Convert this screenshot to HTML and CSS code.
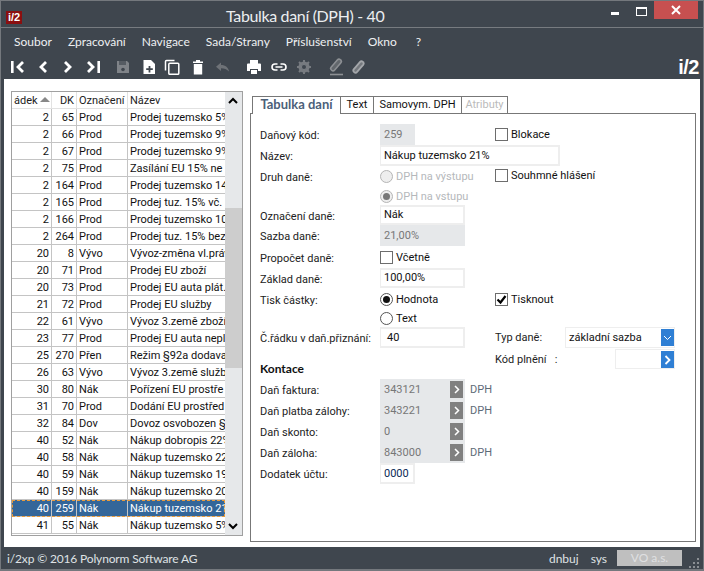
FILE: index.html
```html
<!DOCTYPE html>
<html lang="en">
<head>
    <meta charset="UTF-8">
    <title>Tabulka daní (DPH) - 40</title>
    <link rel="stylesheet" href="styles.css">
</head>
<body>
<div class="window">
    <div class="titlebar">
        <div class="logo">i/2</div>
        <div class="title">Tabulka daní (DPH) - 40</div>
        <div class="win-buttons">
            <span class="win-min"></span>
            <span class="win-max"></span>
            <span class="win-close">
                <svg width="12" height="12" viewBox="0 0 12 12"><path d="M2 2l8 8M10 2l-8 8" stroke="#fff" stroke-width="2"/></svg>
            </span>
        </div>
    </div>

    <div class="menubar">
        <span>Soubor</span>
        <span>Zpracování</span>
        <span>Navigace</span>
        <span>Sada/Strany</span>
        <span>Příslušenství</span>
        <span>Okno</span>
        <span class="help">?</span>
    </div>

    <div class="toolbar">
        <svg class="tool" width="16" height="16" viewBox="0 0 16 16"><path d="M14 3L9 8l5 5" fill="none" stroke="#fff" stroke-width="2.800"/><rect x="2" y="2" width="2.600" height="12" fill="#fff"/></svg>
        <svg class="tool ml10" width="16" height="16" viewBox="0 0 16 16"><path d="M11 3L6 8l5 5" fill="none" stroke="#fff" stroke-width="2.800"/></svg>
        <svg class="tool ml9" width="16" height="16" viewBox="0 0 16 16"><path d="M5 3l5 5-5 5" fill="none" stroke="#fff" stroke-width="2.800"/></svg>
        <svg class="tool ml10" width="16" height="16" viewBox="0 0 16 16"><path d="M2 3l5 5-5 5" fill="none" stroke="#fff" stroke-width="2.800"/><rect x="11.400" y="2" width="2.600" height="12" fill="#fff"/></svg>
        <svg class="tool ml13" width="16" height="16" viewBox="0 0 16 16"><path d="M2 2h10l2 2v10H2z" fill="#7f8388"/><rect x="4" y="2" width="7" height="4" fill="#565c63"/><circle cx="8" cy="10.500" r="1.800" fill="#3f464e"/></svg>
        <svg class="tool ml10" width="16" height="16" viewBox="0 0 16 16"><path d="M2.500 1h7.500l4 4v10H2.500z" fill="#fff"/><path d="M8.500 7v6.500M5.200 10.200h6.600" stroke="#3f464e" stroke-width="1.800"/></svg>
        <svg class="tool ml7" width="16" height="16" viewBox="0 0 16 16"><path d="M1.500 11.500V2.500q0-1 1-1h8" fill="none" stroke="#fff" stroke-width="1.500"/><rect x="4.800" y="4.300" width="10" height="11" rx="1" fill="none" stroke="#fff" stroke-width="1.500"/></svg>
        <svg class="tool ml10" width="16" height="16" viewBox="0 0 16 16"><path d="M3 2.500h10V4H3zM6 1h4v1.500H6zM3.800 5h8.400v10.500H3.800z" fill="#fff"/></svg>
        <svg class="tool ml9" width="16" height="16" viewBox="0 0 16 16"><path d="M6 3.500L1 7.800 6 12V9.200c3.500 0 5.500.8 8 3.300-.6-4-3.500-6.500-8-6.500z" fill="#6e7277"/></svg>
        <svg class="tool ml15" width="16" height="16" viewBox="0 0 16 16"><path d="M4 1h8v3.500H4zM1 5.500q0-1 1-1h12q1 0 1 1V12h-3v-2H4v2H1z" fill="#fff"/><rect x="5" y="11" width="6" height="4" fill="#fff"/></svg>
        <svg class="tool ml9" width="16" height="16" viewBox="0 0 16 16"><path d="M6.500 5H4a3 3 0 0 0 0 6h2.500M9.500 5H12a3 3 0 0 1 0 6H9.500M4.500 8h7" fill="none" stroke="#fff" stroke-width="1.600"/></svg>
        <svg class="tool ml9" width="16" height="16" viewBox="0 0 16 16"><circle cx="8" cy="8" r="4.200" fill="none" stroke="#777b80" stroke-width="2.800"/><path d="M8 1v14M1 8h14M3 3l10 10M13 3L3 13" stroke="#777b80" stroke-width="2"/><circle cx="8" cy="8" r="2" fill="#3f464e"/></svg>
        <svg class="tool ml15" width="18" height="18" viewBox="0 0 18 18"><path d="M6 10.500l6-7" stroke="#8d9094" stroke-width="6" stroke-linecap="round"/><path d="M6 10.500l6-7" stroke="#62676c" stroke-width="3" stroke-linecap="round"/><path d="M3 16.500h13" stroke="#8d9094" stroke-width="1.600"/></svg>
        <svg class="tool ml6" width="16" height="16" viewBox="0 0 16 16"><path d="M4.500 11.500l6-7" stroke="#a4a7aa" stroke-width="6" stroke-linecap="round"/><path d="M4.500 11.500l6-7" stroke="#74787d" stroke-width="2.500" stroke-linecap="round"/></svg>
        <div class="brand">i/2</div>
    </div>

    <div class="content">
        <div class="grid">
            <div class="grid-table">
                <div class="gr head"><span class="c1">ádek<i class="sort"></i></span><span class="c2">DK</span><span class="c3">Označení</span><span class="c4">Název</span></div>
                <div class="gr"><span class="c1">2</span><span class="c2">65</span><span class="c3">Prod</span><span class="c4">Prodej tuzemsko 5%</span></div>
                <div class="gr"><span class="c1">2</span><span class="c2">66</span><span class="c3">Prod</span><span class="c4">Prodej tuzemsko 9%</span></div>
                <div class="gr"><span class="c1">2</span><span class="c2">67</span><span class="c3">Prod</span><span class="c4">Prodej tuzemsko 9%</span></div>
                <div class="gr"><span class="c1">2</span><span class="c2">75</span><span class="c3">Prod</span><span class="c4">Zasílání EU 15% ne</span></div>
                <div class="gr"><span class="c1">2</span><span class="c2">164</span><span class="c3">Prod</span><span class="c4">Prodej tuzemsko 14</span></div>
                <div class="gr"><span class="c1">2</span><span class="c2">165</span><span class="c3">Prod</span><span class="c4">Prodej tuz. 15% vč.</span></div>
                <div class="gr"><span class="c1">2</span><span class="c2">166</span><span class="c3">Prod</span><span class="c4">Prodej tuzemsko 10</span></div>
                <div class="gr"><span class="c1">2</span><span class="c2">264</span><span class="c3">Prod</span><span class="c4">Prodej tuz. 15% bez</span></div>
                <div class="gr"><span class="c1">20</span><span class="c2">8</span><span class="c3">Vývo</span><span class="c4">Vývoz-změna vl.práv</span></div>
                <div class="gr"><span class="c1">20</span><span class="c2">71</span><span class="c3">Prod</span><span class="c4">Prodej EU zboží</span></div>
                <div class="gr"><span class="c1">20</span><span class="c2">73</span><span class="c3">Prod</span><span class="c4">Prodej EU auta plát.</span></div>
                <div class="gr"><span class="c1">21</span><span class="c2">72</span><span class="c3">Prod</span><span class="c4">Prodej EU služby</span></div>
                <div class="gr"><span class="c1">22</span><span class="c2">61</span><span class="c3">Vývo</span><span class="c4">Vývoz 3.země zboží</span></div>
                <div class="gr"><span class="c1">23</span><span class="c2">77</span><span class="c3">Prod</span><span class="c4">Prodej EU auta nepl</span></div>
                <div class="gr"><span class="c1">25</span><span class="c2">270</span><span class="c3">Přen</span><span class="c4">Režim §92a dodava</span></div>
                <div class="gr"><span class="c1">26</span><span class="c2">63</span><span class="c3">Vývo</span><span class="c4">Vývoz 3.země služby</span></div>
                <div class="gr"><span class="c1">30</span><span class="c2">80</span><span class="c3">Nák</span><span class="c4">Pořízení EU prostře</span></div>
                <div class="gr"><span class="c1">31</span><span class="c2">70</span><span class="c3">Prod</span><span class="c4">Dodání EU prostřed</span></div>
                <div class="gr"><span class="c1">32</span><span class="c2">84</span><span class="c3">Dov</span><span class="c4">Dovoz osvobozen §</span></div>
                <div class="gr"><span class="c1">40</span><span class="c2">52</span><span class="c3">Nák</span><span class="c4">Nákup dobropis 22%</span></div>
                <div class="gr"><span class="c1">40</span><span class="c2">58</span><span class="c3">Nák</span><span class="c4">Nákup tuzemsko 22</span></div>
                <div class="gr"><span class="c1">40</span><span class="c2">59</span><span class="c3">Nák</span><span class="c4">Nákup tuzemsko 19</span></div>
                <div class="gr"><span class="c1">40</span><span class="c2">159</span><span class="c3">Nák</span><span class="c4">Nákup tuzemsko 20</span></div>
                <div class="gr selected"><span class="c1">40</span><span class="c2">259</span><span class="c3">Nák</span><span class="c4">Nákup tuzemsko 21</span></div>
                <div class="gr"><span class="c1">41</span><span class="c2">55</span><span class="c3">Nák</span><span class="c4">Nákup tuzemsko 5%</span></div>
            </div>
            <div class="scrollbar">
                <svg class="sb-arrow" width="16" height="17" viewBox="0 0 16 17"><path d="M4 11l4-4 4 4" fill="none" stroke="#000" stroke-width="2"/></svg>
                <div class="sb-track"><div class="sb-thumb"></div></div>
                <svg class="sb-arrow" width="16" height="17" viewBox="0 0 16 17"><path d="M4 6l4 4 4-4" fill="none" stroke="#000" stroke-width="2"/></svg>
            </div>
        </div>

        <div class="panel">
            <div class="tabs">
                <div class="tab active">Tabulka daní</div>
                <div class="tab">Text</div>
                <div class="tab">Samovym. DPH</div>
                <div class="tab disabled">Atributy</div>
            </div>
            <div class="pane">
                <div class="row h21">
                    <label>Daňový kód:</label>
                    <div class="field ro w35">259</div>
                    <div class="check-cell"><i class="check"></i>Blokace</div>
                </div>
                <div class="row h21">
                    <label>Název:</label>
                    <div class="field w180">Nákup tuzemsko 21%</div>
                </div>
                <div class="row h21">
                    <label>Druh daně:</label>
                    <div class="radio off"><i class="dot"></i>DPH na výstupu</div>
                    <div class="check-cell up"><i class="check"></i>Souhmné hlášení</div>
                </div>
                <div class="row h18">
                    <span></span>
                    <div class="radio off"><i class="dot on"></i>DPH na vstupu</div>
                </div>
                <div class="row h20">
                    <label>Označení daně:</label>
                    <div class="field w85">Nák</div>
                </div>
                <div class="row h21">
                    <label>Sazba daně:</label>
                    <div class="field ro w85">21,00%</div>
                </div>
                <div class="row h22">
                    <label>Propočet daně:</label>
                    <div class="check-cell"><i class="check"></i>Včetně</div>
                </div>
                <div class="row h20">
                    <label>Základ daně:</label>
                    <div class="field w85">100,00%</div>
                </div>
                <div class="row h22">
                    <label>Tisk částky:</label>
                    <div class="radio"><i class="dot on"></i>Hodnota</div>
                    <div class="check-cell"><i class="check checked"><svg width="13" height="13" viewBox="0 0 13 13"><path d="M2.500 6.500l3 3 5-6.500" fill="none" stroke="#000" stroke-width="2.200"/></svg></i>Tisknout</div>
                </div>
                <div class="row h17">
                    <span></span>
                    <div class="radio"><i class="dot"></i>Text</div>
                </div>
                <div class="row h21">
                    <label>Č.řádku v daň.přiznání:</label>
                    <div class="field w85 pad">40</div>
                    <div class="side">
                        <span class="side-label">Typ daně:</span>
                        <div class="combo w110">základní sazba<span class="blue-btn"><svg width="9" height="6" viewBox="0 0 9 6"><path d="M1 1l3.500 3.500L8 1" fill="none" stroke="#fff"/></svg></span></div>
                    </div>
                </div>
                <div class="row kontace-row">
                    <div class="kontace">Kontace</div>
                    <span></span>
                    <div class="side top">
                        <span class="side-label kod">Kód plnění&nbsp;&nbsp;&nbsp;:</span>
                        <div class="combo w60"><span class="blue-btn"><svg width="7" height="10" viewBox="0 0 7 10"><path d="M1.500 1l4 4-4 4" fill="none" stroke="#fff" stroke-width="1.800"/></svg></span></div>
                    </div>
                </div>
                <div class="row h21">
                    <label>Daň faktura:</label>
                    <div class="field ro w85">343121<span class="gray-btn"><svg width="6" height="9" viewBox="0 0 6 9"><path d="M1 1l3.500 3.500L1 8" fill="none" stroke="#fff" stroke-width="1.500"/></svg></span><span class="dph">DPH</span></div>
                </div>
                <div class="row h21">
                    <label>Daň platba zálohy:</label>
                    <div class="field ro w85">343221<span class="gray-btn"><svg width="6" height="9" viewBox="0 0 6 9"><path d="M1 1l3.500 3.500L1 8" fill="none" stroke="#fff" stroke-width="1.500"/></svg></span><span class="dph">DPH</span></div>
                </div>
                <div class="row h21">
                    <label>Daň skonto:</label>
                    <div class="field ro w85">0<span class="gray-btn"><svg width="6" height="9" viewBox="0 0 6 9"><path d="M1 1l3.500 3.500L1 8" fill="none" stroke="#fff" stroke-width="1.500"/></svg></span></div>
                </div>
                <div class="row h21">
                    <label>Daň záloha:</label>
                    <div class="field ro w85">843000<span class="gray-btn"><svg width="6" height="9" viewBox="0 0 6 9"><path d="M1 1l3.500 3.500L1 8" fill="none" stroke="#fff" stroke-width="1.500"/></svg></span><span class="dph">DPH</span></div>
                </div>
                <div class="row h21">
                    <label>Dodatek účtu:</label>
                    <div class="field w35 dark">0000</div>
                </div>
            </div>
        </div>
    </div>

    <div class="statusbar">
        <span class="status-left">i/2xp © 2016 Polynorm Software AG</span>
        <span class="status-user">dnbuj</span>
        <span class="status-sys">sys</span>
        <span class="status-firm">VO a.s.</span>
        <svg class="grip" width="12" height="12" viewBox="0 0 12 12"><path d="M9 1h2v2H9zM5 5h2v2H5zM9 5h2v2H9zM1 9h2v2H1zM5 9h2v2H5zM9 9h2v2H9z" fill="#8b8f94"/></svg>
    </div>
</div>
</body>
</html>
```

FILE: styles.css
```css
* {
    box-sizing: border-box;
}
html, body {
    margin: 0;
    padding: 0;
}
body {
    width: 704px;
    height: 571px;
    overflow: hidden;
    font-family: "Roboto", "Liberation Sans", sans-serif;
    font-size: 11px;
    color: #111;
}
.window {
    width: 704px;
    height: 571px;
    background: #3f464e;
    border: 1px solid #74787d;
    border-bottom-width: 2px;
    display: flex;
    flex-direction: column;
}

/* title bar */
.titlebar {
    height: 27px;
    flex: none;
    border-bottom: 1px solid #777b80;
    display: flex;
    align-items: flex-start;
    position: relative;
}
.logo {
    width: 16px;
    height: 13px;
    margin: 10px 0 0 5px;
    background: #8a0f10;
    color: #fff;
    font: bold 11px/13px "Liberation Sans", sans-serif;
    text-align: center;
}
.title {
    position: absolute;
    left: 225px;
    top: 3px;
    color: #eceef0;
    font-family: "Lato", sans-serif;
    font-size: 16px;
    letter-spacing: -0.35px;
    line-height: 24px;
    white-space: nowrap;
}
.win-buttons {
    margin-left: auto;
    display: flex;
    align-items: flex-start;
    margin-right: 5px;
}
.win-min {
    width: 8px;
    height: 3px;
    margin: 11px 17px 0 0;
    background: #fff;
}
.win-max {
    width: 11px;
    height: 9px;
    margin: 6px 7px 0 0;
    border: 1px solid #fff;
    border-top-width: 2px;
}
.win-close {
    width: 44px;
    height: 18px;
    background: #c75050;
    display: flex;
    align-items: center;
    justify-content: center;
}

/* menu and toolbar */
.menubar {
    height: 27px;
    flex: none;
    display: flex;
    align-items: center;
    color: #eef0f2;
    font-family: "Lato", sans-serif;
    font-size: 12px;
    padding-left: 13px;
    gap: 16px;
}
.menubar span {
    white-space: nowrap;
}
.menubar .help {
    margin-left: 3px;
}
.toolbar {
    height: 24px;
    flex: none;
    display: flex;
    align-items: center;
    padding-left: 8px;
}
.tool {
    flex: none;
}
.ml6 { margin-left: 6px; }
.ml7 { margin-left: 7px; }
.ml9 { margin-left: 9px; }
.ml10 { margin-left: 10px; }
.ml13 { margin-left: 13px; }
.ml15 { margin-left: 15px; }
.brand {
    margin-left: auto;
    margin-right: 4px;
    color: #fff;
    font: bold 20px/24px "Liberation Sans", sans-serif;
    letter-spacing: -0.5px;
}

/* main area */
.content {
    width: 696px;
    height: 468px;
    flex: none;
    margin-left: 3px;
    background: #fff;
    display: flex;
    padding: 12px 0 0 7px;
}
.grid {
    width: 232px;
    height: 445px;
    flex: none;
    border: 1px solid #a0a0a0;
    display: flex;
    background: #fff;
}
.grid-table {
    width: 213px;
    flex: none;
}
.gr {
    height: 17px;
    display: flex;
    line-height: 18px;
    border-bottom: 1px solid #c4c4c4;
}
.gr span {
    display: block;
    height: 16px;
    overflow: hidden;
    white-space: nowrap;
    border-right: 1px solid #c4c4c4;
}
.c1 {
    width: 40px;
    text-align: right;
    padding-right: 2px;
}
.c2 {
    width: 25px;
    text-align: right;
    padding-right: 2px;
}
.c3 {
    width: 51px;
    padding-left: 2px;
}
.gr .c4 {
    width: 97px;
    padding-left: 2px;
    border-right: 0;
}
.head {
    height: 17px;
    border-bottom: 1px solid #e2e2e2;
}
.gr.head span {
    border-right-color: #e2e2e2;
    color: #222;
}
.head .c1 {
    text-align: left;
    padding: 0 0 0 2px;
}
.sort {
    display: inline-block;
    width: 0;
    height: 0;
    margin: 0 0 2px 2px;
    border-left: 5px solid transparent;
    border-right: 5px solid transparent;
    border-bottom: 5px solid #888;
}
.selected {
    background: #346699;
    outline: 1px dashed #e89b3c;
    outline-offset: -1px;
}
.gr.selected span {
    color: #fff;
}
.scrollbar {
    width: 17px;
    flex: none;
    background: #e6e8ea;
    display: flex;
    flex-direction: column;
}
.sb-arrow {
    flex: none;
}
.sb-track {
    flex: 1;
    padding-top: 99px;
}
.sb-thumb {
    height: 160px;
    background: #cdcdcd;
}

/* tab panel */
.panel {
    width: 446px;
    margin-left: 7px;
}
.tabs {
    height: 22px;
    padding: 5px 0 0 2px;
    display: flex;
    align-items: flex-end;
}
.tab {
    height: 17px;
    line-height: 15px;
    border: 1px solid #777;
    border-bottom: 0;
    border-left: 0;
    text-align: center;
    white-space: nowrap;
}
.tab:nth-child(2) {
    width: 33px;
}
.tab:nth-child(3) {
    width: 88px;
}
.tab:nth-child(4) {
    width: 46px;
}
.tab.active {
    width: 89px;
    height: 18px;
    border-left: 1px solid #777;
    background: #fff;
    color: #4b6079;
    font-family: "Lato", sans-serif;
    font-size: 13px;
    font-weight: bold;
    margin-bottom: -1px;
    position: relative;
}
.tab.disabled {
    color: #bbb;
}
.pane {
    height: 429px;
    border: 1px solid #777;
    padding: 10px 0 0 9px;
}

/* form rows */
.row {
    display: grid;
    grid-template-columns: 120px 115px 1fr;
    align-items: center;
}
.h17 { height: 17px; }
.h18 { height: 18px; }
.h20 { height: 20px; }
.h21 { height: 21px; }
.h22 { height: 22px; }
.row label {
    color: #222;
    white-space: nowrap;
    padding-top: 2px;
}
.field {
    height: 100%;
    padding-left: 3px;
    border: 2px solid #eee;
    border-left-width: 1px;
    line-height: 16px;
    color: #111;
    position: relative;
    display: flex;
    align-items: center;
}
.field.pad {
    padding-left: 6px;
}
.field.dark {
    color: #0a2a55;
}
.w35 { width: 35px; }
.w85 { width: 85px; }
.w180 {
    width: 180px;
    grid-column: 2 / 4;
}
.ro {
    background: #e6e8ea;
    border-color: #e6e8ea;
    color: #777;
}
.gray-btn {
    position: absolute;
    right: 0;
    top: 0;
    width: 13px;
    height: 17px;
    background: #808080;
    display: flex;
    align-items: center;
    justify-content: center;
}
.dph {
    position: absolute;
    left: 89px;
    color: #5e6a78;
}
.check-cell {
    display: flex;
    align-items: center;
    color: #111;
    gap: 3px;
    white-space: nowrap;
}
.check-cell.up {
    margin-bottom: 2px;
}
.check {
    display: block;
    width: 13px;
    height: 13px;
    border: 1px solid #6d6d6d;
    background: #fff;
    position: relative;
}
.check svg {
    display: block;
    margin: -1px;
}
.radio {
    display: flex;
    align-items: center;
    gap: 3px;
}
.dot {
    display: block;
    width: 13px;
    height: 13px;
    border: 1px solid #555;
    border-radius: 50%;
    background: #fff;
    position: relative;
}
.dot.on::after {
    content: "";
    position: absolute;
    left: 2px;
    top: 2px;
    width: 7px;
    height: 7px;
    border-radius: 50%;
    background: #111;
}
.radio.off {
    color: #b5b8bb;
    white-space: nowrap;
}
.radio.off .dot {
    border-color: #b5b5b5;
    background: #eee;
}
.radio.off .dot.on::after {
    background: #777;
}
.side {
    display: flex;
    align-items: center;
    height: 21px;
    position: relative;
}
.side.top {
    align-self: start;
    margin-top: 1px;
    height: 20px;
}
.side-label {
    color: #222;
    white-space: nowrap;
}
.combo {
    position: absolute;
    right: 20px;
    top: 0;
    height: 100%;
    border: 1px solid #eee;
    padding-left: 3px;
    line-height: 19px;
    white-space: nowrap;
}
.w110 { width: 110px; }
.w60 { width: 60px; }
.blue-btn {
    position: absolute;
    right: 0;
    top: 1px;
    width: 13px;
    height: 17px;
    background: #2f7fd4;
    display: flex;
    align-items: center;
    justify-content: center;
}
.kontace-row {
    height: 31px;
}
.kontace {
    align-self: end;
    font-family: "Lato", sans-serif;
    font-size: 12px;
    font-weight: bold;
    padding-bottom: 3px;
}

/* status bar */
.statusbar {
    flex: 1;
    display: flex;
    align-items: center;
    color: #dfe2e5;
    font-family: "Lato", sans-serif;
    font-size: 12px;
    padding: 0 3px 0 6px;
}
.status-left {
    flex: 1;
    letter-spacing: -0.15px;
}
.status-user {
    margin-right: 12px;
}
.status-sys {
    margin-right: 10px;
}
.status-firm {
    width: 65px;
    height: 16px;
    margin-right: 6px;
    background: #bfbfbf;
    color: #dfe0e2;
    text-align: center;
    line-height: 16px;
}
.grip {
    flex: none;
    align-self: flex-end;
}
```
